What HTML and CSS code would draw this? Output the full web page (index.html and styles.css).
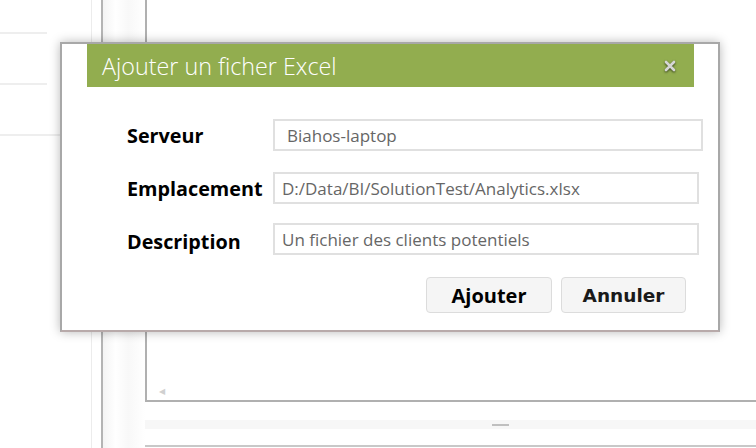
FILE: index.html
```html
<!DOCTYPE html>
<html lang="fr">
<head>
    <meta charset="UTF-8">
    <meta name="viewport" content="width=device-width, initial-scale=1.0">
    <title>Ajouter un ficher Excel</title>
    <link rel="stylesheet" href="styles.css">
</head>
<body>
    <div class="app">
        <div class="sidebar">
            <div class="side-item"></div>
            <div class="side-item"></div>
            <div class="side-item wide"></div>
        </div>
        <div class="gutter"></div>
        <div class="rail"></div>
        <div class="workspace">
            <div class="panel">
                <span class="scroll-arrow">&#9664;</span>
            </div>
            <div class="splitter">
                <div class="splitter-band"><span class="grip"></span></div>
            </div>
        </div>
    </div>

    <div class="dialog">
        <div class="dialog-title">
            <h2>Ajouter un ficher Excel</h2>
            <button type="button" class="close" aria-label="Fermer">
                <svg width="12" height="12" viewBox="0 0 12 12">
                    <path d="M2 2 L10 10 M10 2 L2 10" stroke="#d6d6d6" stroke-width="2.6" stroke-linecap="round"/>
                </svg>
            </button>
        </div>
        <form class="dialog-form">
            <div class="field">
                <label for="serveur">Serveur</label>
                <input type="text" id="serveur" class="wide" value="Biahos-laptop">
            </div>
            <div class="field">
                <label for="emplacement">Emplacement</label>
                <input type="text" id="emplacement" value="D:/Data/BI/SolutionTest/Analytics.xlsx">
            </div>
            <div class="field field-desc">
                <label for="description">Description</label>
                <input type="text" id="description" value="Un fichier des clients potentiels">
            </div>
            <div class="actions">
                <button type="submit" class="btn">Ajouter</button>
                <button type="button" class="btn btn-cancel">Annuler</button>
            </div>
        </form>
    </div>
</body>
</html>
```

FILE: styles.css
```css
body {
    margin: 0;
    width: 756px;
    height: 448px;
    overflow: hidden;
    background-color: #ffffff;
    font-family: "Open Sans", "Noto Sans", Arial, sans-serif;
}

.app {
    display: flex;
    height: 448px;
}

.sidebar {
    width: 91px;
    border-right: 1px solid #ececec;
    display: flex;
    flex-direction: column;
}
.side-item {
    width: 47px;
    height: 49px;
    border-bottom: 2px solid #eeeeee;
}
.side-item:first-child {
    height: 32px;
}
.side-item.wide {
    width: 60px;
}

.gutter {
    width: 9px;
    border-right: 2px solid #b4b4b4;
}

.rail {
    width: 42px;
    background: linear-gradient(to right, #f4f4f4, #ffffff 30%, #f8f8f8 60%, #ffffff);
}

.workspace {
    flex: 1;
    display: flex;
    flex-direction: column;
}
.panel {
    height: 396px;
    border-left: 2px solid #b0b0b0;
    border-bottom: 2px solid #b0b0b0;
    display: flex;
    align-items: flex-end;
    padding: 0 0 4px 12px;
}
.scroll-arrow {
    font-size: 8px;
    color: #d0d0d0;
}
.splitter {
    flex: 1;
    padding-top: 18px;
    border-bottom: 2px solid #c8c8c8;
    margin-bottom: 1px;
}
.splitter-band {
    height: 9px;
    background-color: #f7f7f7;
    display: flex;
    justify-content: center;
    align-items: center;
    padding-left: 100px;
}
.grip {
    width: 17px;
    height: 2px;
    background-color: #c0c0c0;
}

/* boite de dialogue */
.dialog {
    position: absolute;
    left: 60px;
    top: 42px;
    width: 656px;
    height: 286px;
    background-color: #ffffff;
    border: 2px solid #a8a8a8;
    border-bottom-color: #b8aaaa;
    box-shadow: 0 0 10px rgba(0, 0, 0, 0.28);
}

.dialog-title {
    margin: 0 24px 0 25px;
    height: 43px;
    background-color: #92ad4f;
    display: flex;
    align-items: center;
    justify-content: space-between;
    padding: 0 18px 0 15px;
}
.dialog-title h2 {
    margin: 0;
    color: #ffffff;
    font-weight: 300;
    font-size: 23.3px;
}
.close {
    border: none;
    background: none;
    padding: 0;
    display: flex;
    filter: drop-shadow(0 1px 1px rgba(40, 50, 20, 0.9));
}

.dialog-form {
    padding: 32px 15px 0 65px;
}
.field {
    display: flex;
    align-items: center;
    margin-bottom: 21px;
}
.field-desc {
    margin-top: -2px;
}
.field label {
    width: 146px;
    flex-shrink: 0;
    font-weight: bold;
    font-size: 19.8px;
    color: #000000;
}
.field-desc label {
    padding-top: 4px;
}
.field input {
    width: 426px;
    height: 32px;
    box-sizing: border-box;
    border: 2px solid #e0e0e0;
    padding: 0 7px;
    font-family: inherit;
    font-size: 17px;
    color: #666666;
}
.field input.wide {
    width: 430px;
    padding-left: 12px;
}

.actions {
    display: flex;
    justify-content: flex-end;
    gap: 9px;
    margin-top: 22px;
    margin-right: 17px;
}
.btn {
    width: 126px;
    height: 36px;
    background-color: #f5f5f5;
    border: 1px solid #dcdcdc;
    border-radius: 4px;
    font-family: inherit;
    font-weight: bold;
    font-size: 20px;
    color: #000000;
    cursor: pointer;
}
.btn-cancel {
    width: 125px;
    color: #1a1a1a;
    font-family: "DejaVu Sans", sans-serif;
    font-size: 18.5px;
}
```
